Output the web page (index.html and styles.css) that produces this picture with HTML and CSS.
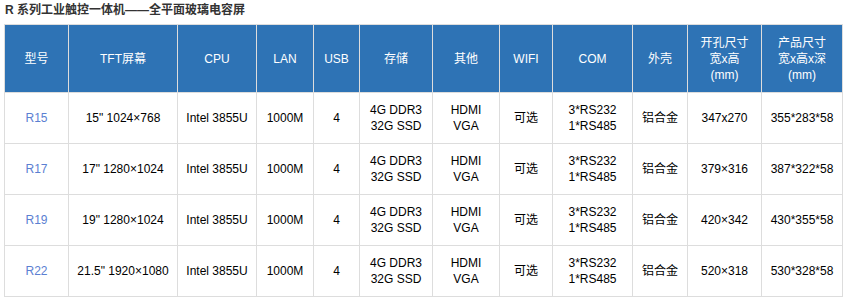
FILE: index.html
```html
<!DOCTYPE html>
<html lang="zh-CN">
<head>
<meta charset="utf-8">
<title>R 系列工业触控一体机</title>
<link rel="stylesheet" href="styles.css">
</head>
<body>
<div class="page">
  <h2 class="title">R 系列工业触控一体机——全平面玻璃电容屏</h2>
  <table class="spec">
    <colgroup>
      <col style="width:64px"><col style="width:109px"><col style="width:79px"><col style="width:57px">
      <col style="width:46px"><col style="width:73px"><col style="width:67px"><col style="width:53px">
      <col style="width:80px"><col style="width:55px"><col style="width:74px"><col style="width:81px">
    </colgroup>
    <thead>
      <tr>
        <th>型号</th><th>TFT屏幕</th><th>CPU</th><th>LAN</th><th>USB</th><th>存储</th><th>其他</th><th>WIFI</th><th>COM</th><th>外壳</th><th>开孔尺寸<br>宽x高<br>(mm)</th><th>产品尺寸<br>宽x高x深<br>(mm)</th>
      </tr>
    </thead>
    <tbody>
      <tr>
        <td class="model">R15</td><td>15" 1024×768</td><td>Intel 3855U</td><td>1000M</td><td>4</td><td>4G DDR3<br>32G SSD</td><td>HDMI<br>VGA</td><td>可选</td><td>3*RS232<br>1*RS485</td><td>铝合金</td><td>347x270</td><td>355*283*58</td>
      </tr>
      <tr>
        <td class="model">R17</td><td>17" 1280×1024</td><td>Intel 3855U</td><td>1000M</td><td>4</td><td>4G DDR3<br>32G SSD</td><td>HDMI<br>VGA</td><td>可选</td><td>3*RS232<br>1*RS485</td><td>铝合金</td><td>379×316</td><td>387*322*58</td>
      </tr>
      <tr>
        <td class="model">R19</td><td>19" 1280×1024</td><td>Intel 3855U</td><td>1000M</td><td>4</td><td>4G DDR3<br>32G SSD</td><td>HDMI<br>VGA</td><td>可选</td><td>3*RS232<br>1*RS485</td><td>铝合金</td><td>420×342</td><td>430*355*58</td>
      </tr>
      <tr>
        <td class="model">R22</td><td>21.5" 1920×1080</td><td>Intel 3855U</td><td>1000M</td><td>4</td><td>4G DDR3<br>32G SSD</td><td>HDMI<br>VGA</td><td>可选</td><td>3*RS232<br>1*RS485</td><td>铝合金</td><td>520×318</td><td>530*328*58</td>
      </tr>
    </tbody>
  </table>
</div>
</body>
</html>
```
FILE: styles.css
```css
html, body {
  margin: 0;
  padding: 0;
  background: #fff;
}
.page {
  padding: 0 4px;
  font-family: "Liberation Sans", Arial, "Noto Sans CJK SC", sans-serif;
  font-size: 12px;
  color: #000;
}
.title {
  margin: 0 0 4px 1px;
  font-size: 12px;
  line-height: 20px;
  font-weight: bold;
  color: #333;
}
.spec {
  width: 838px;
  table-layout: fixed;
  border-collapse: collapse;
}
.spec th,
.spec td {
  border: 1px solid #ddd;
  text-align: center;
  vertical-align: middle;
  line-height: 16px;
  padding: 9px 2px;
}
.spec th {
  background: #2e73b5;
  color: #fff;
  font-weight: normal;
  padding: 10px 2px 9px;
}
.spec td.model {
  color: #5b7fd2;
}
```
